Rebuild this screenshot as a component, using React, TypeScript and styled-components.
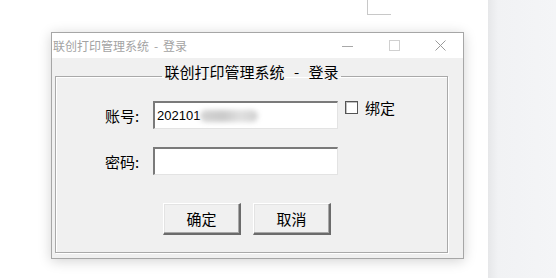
import styled, { createGlobalStyle } from 'styled-components'

const Global = createGlobalStyle`
  html, body {
    margin: 0;
    padding: 0;
    background: #ffffff;
  }
  body {
    font-family: "Noto Sans CJK SC", "Liberation Sans", sans-serif;
    width: 556px;
    height: 278px;
    overflow: hidden;
  }
`

const cjk = `"Noto Sans CJK SC", "Liberation Sans", sans-serif`

const Screen = styled.div`
  display: flex;
  width: 556px;
  height: 278px;
`

const Desk = styled.div`
  flex: 1;
  display: flex;
  flex-direction: column;
`

const PageMark = styled.div`
  margin-left: 367px;
  width: 24px;
  height: 15px;
  border-left: 1px solid #c8c8c8;
  border-bottom: 1px solid #c8c8c8;
  box-sizing: border-box;
`

const SidePanel = styled.div`
  width: 68px;
  background: linear-gradient(to right, #e6e7e9 0px, #f1f2f4 10px, #f4f5f7 100%);
`

const Window = styled.div`
  margin-top: 17px;
  margin-left: 51px;
  width: 413px;
  height: 227px;
  box-sizing: border-box;
  border: 1px solid #a6a6a6;
  background: #f0f0f0;
  box-shadow: 0 2px 12px rgba(0, 0, 0, 0.18);
  display: flex;
  flex-direction: column;
`

const TitleBar = styled.div`
  height: 25px;
  background: #ffffff;
  display: flex;
  align-items: center;
  padding-left: 1px;
`

const TitleText = styled.span`
  flex: 1;
  font-family: ${cjk};
  font-size: 12px;
  color: #a3a3a3;
  white-space: pre;
`

// half-width " - " of the bitmap font is wider than in Noto
const Sep = styled.span<{ $w: number }>`
  display: inline-block;
  width: ${p => p.$w}px;
  text-align: center;
`

const Controls = styled.div`
  display: flex;
  align-items: center;
  height: 25px;
`

const ControlBox = styled.div`
  width: 46px;
  height: 25px;
  display: flex;
  align-items: center;
  justify-content: center;
`

const Body = styled.div`
  flex: 1;
  display: flex;
  padding: 5px 15px 5px 3px;
`

const Group = styled.fieldset`
  flex: 1;
  margin: 0;
  padding: 12px 0 0 0;
  border: 1px solid #a9a9a9;
  box-shadow: inset 1px 1px 0 #ffffff, 1px 1px 0 #ffffff;
  min-width: 0;
`

const Legend = styled.legend`
  margin: 0 auto;
  padding: 0 2px 8px;
  font-family: ${cjk};
  font-size: 15px;
  line-height: 18px;
  color: #000;
  white-space: pre;
`

const Form = styled.div`
  padding-left: 49px;
`

const Row = styled.div<{ $gap?: number }>`
  display: flex;
  align-items: center;
  margin-bottom: ${p => p.$gap ?? 0}px;
`

const Label = styled.label`
  width: 48px;
  font-family: ${cjk};
  font-size: 15px;
  color: #000;
  white-space: pre;
`

const Field = styled.div`
  width: 185px;
  height: 28px;
  box-sizing: border-box;
  background: #ffffff;
  border-top: 2px solid #7a7a7a;
  border-left: 2px solid #7a7a7a;
  border-right: 1px solid #e3e3e3;
  border-bottom: 1px solid #e3e3e3;
  display: flex;
  align-items: center;
  padding-left: 2px;
  font-family: "Liberation Sans", sans-serif;
  font-size: 13px;
  color: #000;
`

const Smudge = styled.span`
  display: inline-block;
  width: 58px;
  height: 12px;
  margin-left: 0;
  border-radius: 6px;
  background: linear-gradient(to right, #d4d4d4, #cacaca 40%, #e0e0e0 70%, #d0d0d0);
  filter: blur(2.5px);
`

const Check = styled.label`
  align-self: flex-start;
  margin-left: 7px;
  display: flex;
  align-items: flex-start;
  gap: 7px;
  font-family: ${cjk};
  font-size: 15px;
  line-height: 14px;
  color: #000;
`

const Box = styled.span`
  width: 13px;
  height: 13px;
  box-sizing: border-box;
  border: 1px solid #555;
  background: #fff;
  box-shadow: inset 1px 1px 0 #c0c0c0;
`

const Buttons = styled.div`
  display: flex;
  gap: 12px;
  padding-left: 58px;
  margin-top: 28px;
`

const Button = styled.button`
  width: 78px;
  height: 32px;
  box-sizing: border-box;
  background: #f0f0f0;
  border-top: 1px solid #ffffff;
  border-left: 1px solid #ffffff;
  border-right: 2px solid #6b6b6b;
  border-bottom: 2px solid #6b6b6b;
  box-shadow: inset -1px -1px 0 #a8a8a8, inset 1px 1px 0 #e3e3e3;
  font-family: ${cjk};
  font-size: 15px;
  color: #000;
  padding: 0;
`

export default function App() {
  return (
    <>
      <Global />
      <Screen>
        <Desk>
          <PageMark />
          <Window>
            <TitleBar>
              <TitleText>
                联创打印管理系统<Sep $w={14}>-</Sep>登录
              </TitleText>
              <Controls>
                <ControlBox>
                  <svg width="12" height="10" viewBox="0 0 12 10">
                    <line x1="0" y1="5.5" x2="11" y2="5.5" stroke="#a8a8a8" strokeWidth="1" />
                  </svg>
                </ControlBox>
                <ControlBox>
                  <svg width="11" height="11" viewBox="0 0 11 11">
                    <rect x="0.5" y="0.5" width="10" height="10" fill="none" stroke="#d0d0d0" strokeWidth="1" />
                  </svg>
                </ControlBox>
                <ControlBox>
                  <svg width="11" height="11" viewBox="0 0 11 11">
                    <path d="M0.5 0.5 L10.5 10.5 M10.5 0.5 L0.5 10.5" stroke="#9a9a9a" strokeWidth="1" />
                  </svg>
                </ControlBox>
              </Controls>
            </TitleBar>
            <Body>
              <Group>
                <Legend>
                  联创打印管理系统<Sep $w={24}>-</Sep>登录
                </Legend>
                <Form>
                  <Row $gap={18}>
                    <Label>账号:</Label>
                    <Field>
                      202101<Smudge />
                    </Field>
                    <Check>
                      <Box />
                      绑定
                    </Check>
                  </Row>
                  <Row>
                    <Label>密码:</Label>
                    <Field />
                  </Row>
                  <Buttons>
                    <Button>确定</Button>
                    <Button>取消</Button>
                  </Buttons>
                </Form>
              </Group>
            </Body>
          </Window>
        </Desk>
        <SidePanel />
      </Screen>
    </>
  )
}
